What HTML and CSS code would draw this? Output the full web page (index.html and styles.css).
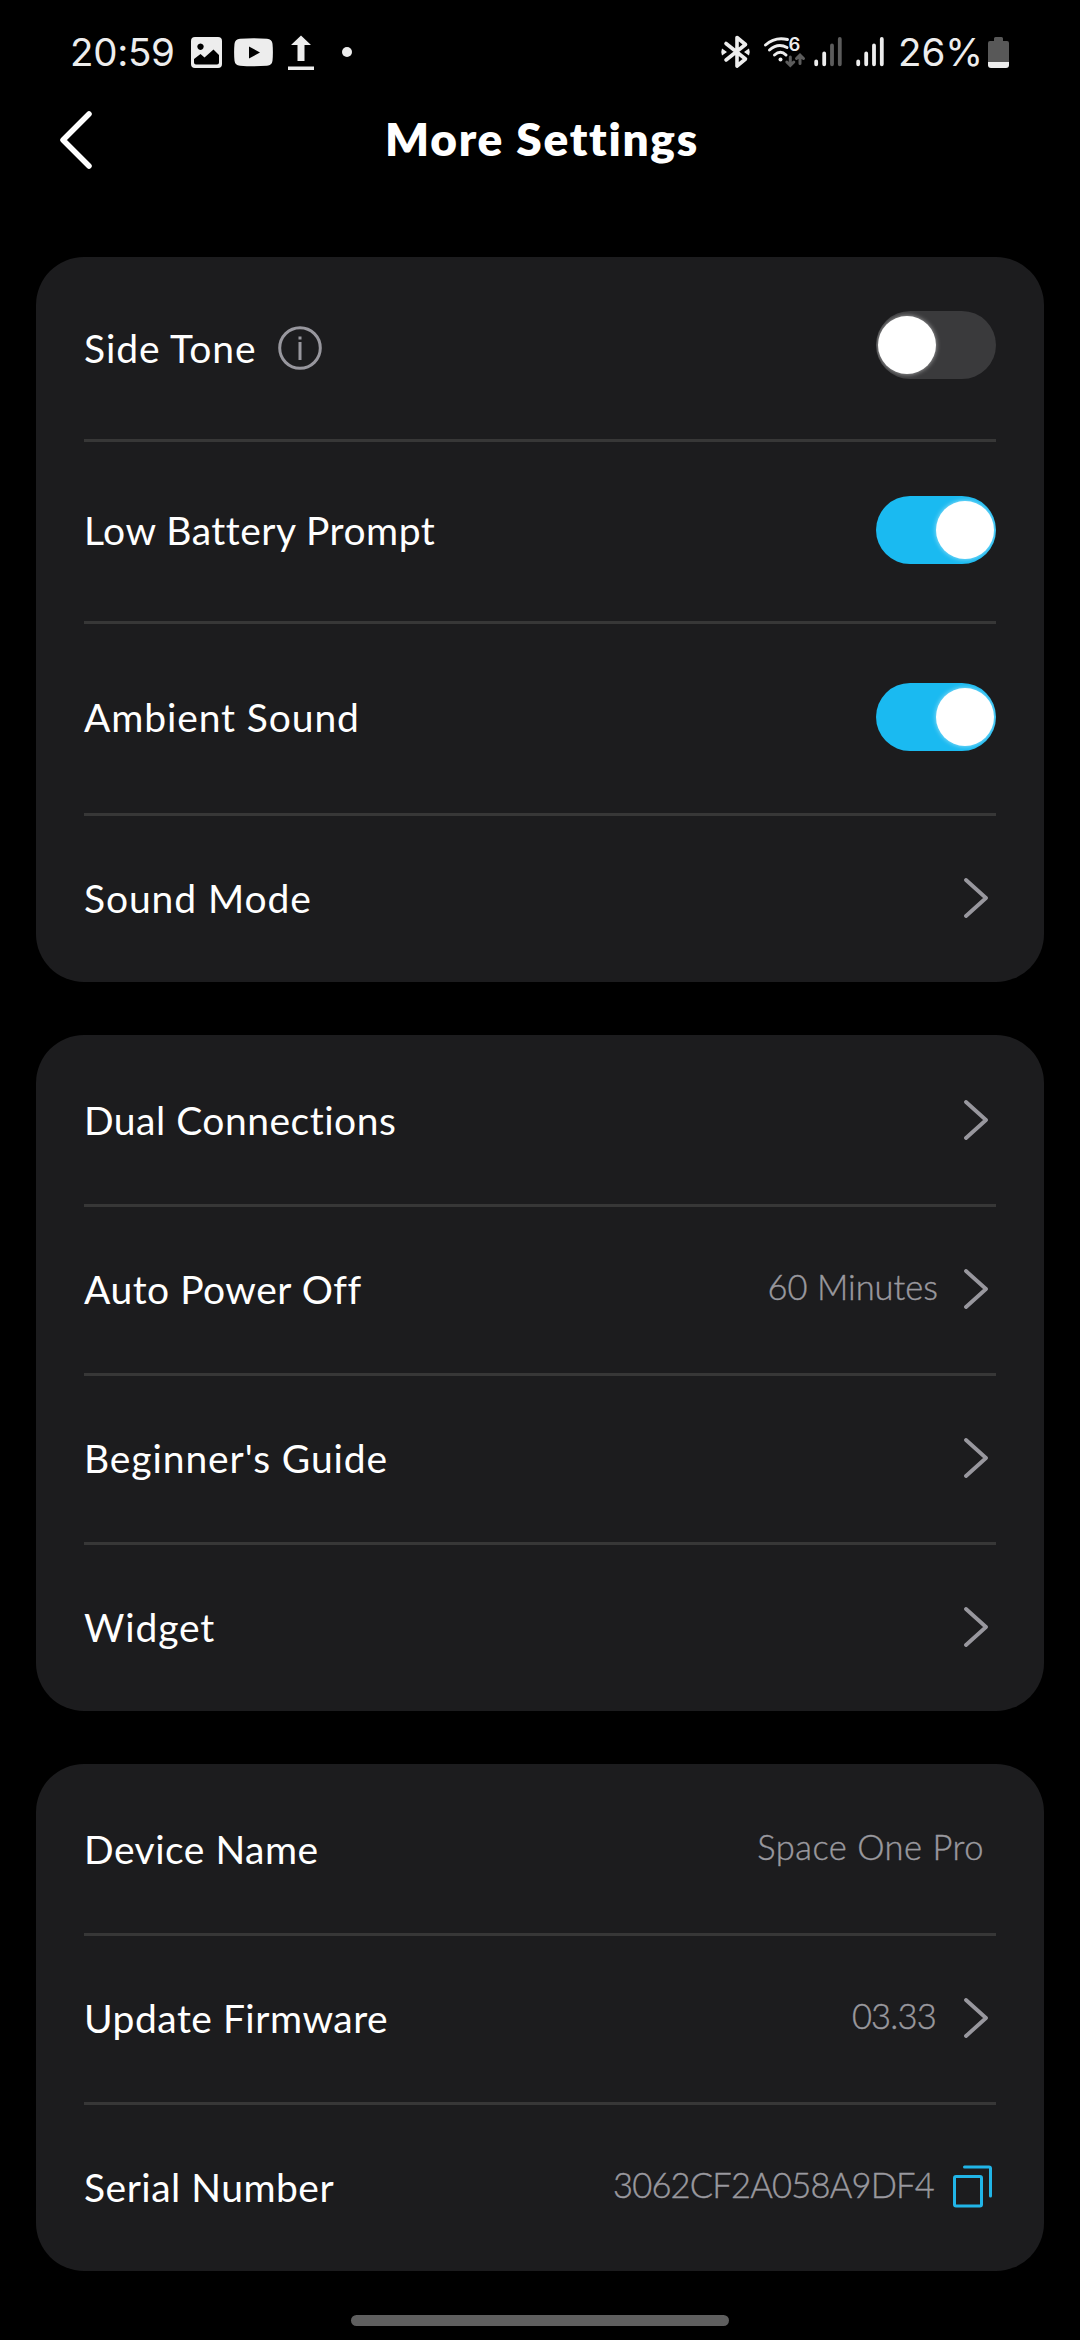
FILE: index.html
```html
<!DOCTYPE html>
<html lang="en">
<head>
    <meta charset="UTF-8">
    <meta name="viewport" content="width=device-width, initial-scale=1.0">
    <title>More Settings</title>
    <link rel="stylesheet" href="styles.css">
</head>
<body>
    <!-- Status bar -->
    <div class="status-bar">
        <div class="status-left">
            <span class="clock">20:59</span>
            <svg class="status-icons" width="168" height="44" viewBox="186 30 168 44">
                <path fill="#ededed" fill-rule="evenodd" d="M195 37h23a4 4 0 0 1 4 4v23a4 4 0 0 1-4 4h-23a4 4 0 0 1-4-4V41a4 4 0 0 1 4-4zM200.500 43.500a3.200 3.200 0 1 0 .01 0zM194 59v3.500a2 2 0 0 0 2 2h21a2 2 0 0 0 2-2V55l-5.500-5.500-9 8-4-3.500z"/>
                <path fill="#ededed" fill-rule="evenodd" d="M240 38.700q13.500-1 27 0 5 .3 5.500 5 .8 8.500 0 17-.5 4.500-5.500 5-13.500 1-27 0-5-.5-5.500-5-.8-8.500 0-17 .5-4.700 5.500-5zM249 46.500v12l11-6z"/>
                <path fill="#ededed" d="M301 35.500l10 9.500h-6.500v16h-7V45H291zM288 66.500h26v3.500h-26z"/>
                <circle cx="347" cy="52" r="5" fill="#ededed"/>
            </svg>
        </div>
        <div class="status-right">
            <svg class="status-icons" width="174" height="44" viewBox="716 30 174 44">
                <!-- bluetooth -->
                <path fill="none" stroke="#ededed" stroke-width="3.600" stroke-linecap="round" stroke-linejoin="round" d="M726 43.500l19.500 15.500-8.500 7V37.500l8.500 7L726 60"/>
                <path fill="#ededed" d="M722 48.500l5 3.500-5 3.500q-1.500-3.500 0-7zM749 48.500l-5 3.500 5 3.500q1.500-3.500 0-7z"/>
                <!-- wifi -->
                <g fill="none" stroke="#ededed" stroke-width="3" stroke-linecap="round">
                    <path d="M765.500 45Q775 36.500 787.500 39.500"/>
                    <path d="M769.500 50Q778 42.500 787 47.500"/>
                    <path d="M774.500 55Q780.500 49.500 786 55"/>
                </g>
                <circle cx="780.500" cy="59.500" r="2" fill="#ededed"/>
                <text class="wifi-gen" x="788.500" y="50.500">6</text>
                <path fill="none" stroke="#5c5c5c" stroke-width="3" stroke-linecap="round" d="M790.300 57v8M786.800 62l3.500 3.500 3.500-3.500M800 63.500v-8M796.500 58.500l3.500-3.500 3.500 3.500"/>
                <!-- signal bars -->
                <g stroke-width="3.800" stroke-linecap="round" stroke="#ededed">
                    <path d="M816.200 61.500v2.800M824.200 53.500v10.800"/>
                    <path stroke="#5c5c5c" d="M832 45.500v18.800M839.800 39v25.300"/>
                    <path d="M858.200 61.500v2.800M866.200 53.500v10.800M874 45.500v18.800M881.800 39v25.300"/>
                </g>
            </svg>
            <span class="battery-text">26%</span>
            <svg class="battery" width="21" height="31" viewBox="0 0 21 31">
                <path fill="#585858" d="M6 1.500A1.500 1.500 0 0 1 7.500 0h6A1.500 1.500 0 0 1 15 1.500V4h4a2 2 0 0 1 2 2v19H0V6a2 2 0 0 1 2-2h4z"/>
                <path fill="#ededed" d="M0 25h21v3a3 3 0 0 1-3 3H3a3 3 0 0 1-3-3z"/>
            </svg>
        </div>
    </div>

    <!-- Header -->
    <header class="header">
        <svg class="back" width="34" height="60" viewBox="0 0 34 60">
            <path d="M30 4L4 30l26 26"/>
        </svg>
        <h1 class="title">More Settings</h1>
    </header>

    <main class="settings">
        <section class="card">
            <div class="row row-toggle">
                <span class="label wide">Side Tone</span>
                <svg class="info" width="44" height="44" viewBox="0 0 44 44">
                    <circle cx="22" cy="22" r="20.300"/>
                    <path d="M22 10.500v3M22 16v18"/>
                </svg>
                <span class="toggle toggle-raised"><span class="knob"></span></span>
            </div>
            <div class="row row-toggle">
                <span class="label">Low Battery Prompt</span>
                <span class="toggle on"><span class="knob"></span></span>
            </div>
            <div class="row row-ambient">
                <span class="label wide">Ambient Sound</span>
                <span class="toggle on"><span class="knob"></span></span>
            </div>
            <div class="row">
                <span class="label wide">Sound Mode</span>
                <svg class="chevron" width="24" height="40" viewBox="0 0 24 40"><path d="M2 2l20 18L2 38"/></svg>
            </div>
        </section>

        <section class="card">
            <div class="row">
                <span class="label">Dual Connections</span>
                <svg class="chevron" width="24" height="40" viewBox="0 0 24 40"><path d="M2 2l20 18L2 38"/></svg>
            </div>
            <div class="row">
                <span class="label">Auto Power Off</span>
                <span class="value">60 Minutes</span>
                <svg class="chevron" width="24" height="40" viewBox="0 0 24 40"><path d="M2 2l20 18L2 38"/></svg>
            </div>
            <div class="row">
                <span class="label wide">Beginner's Guide</span>
                <svg class="chevron" width="24" height="40" viewBox="0 0 24 40"><path d="M2 2l20 18L2 38"/></svg>
            </div>
            <div class="row">
                <span class="label wide">Widget</span>
                <svg class="chevron" width="24" height="40" viewBox="0 0 24 40"><path d="M2 2l20 18L2 38"/></svg>
            </div>
        </section>

        <section class="card">
            <div class="row">
                <span class="label">Device Name</span>
                <span class="value device-name">Space One Pro</span>
            </div>
            <div class="row">
                <span class="label">Update Firmware</span>
                <span class="value version">03.33</span>
                <svg class="chevron" width="24" height="40" viewBox="0 0 24 40"><path d="M2 2l20 18L2 38"/></svg>
            </div>
            <div class="row">
                <span class="label">Serial Number</span>
                <span class="value serial">3062CF2A058A9DF4</span>
                <svg class="copy" width="40" height="43" viewBox="0 0 40 43">
                    <rect x="1.500" y="11.500" width="27" height="29.500" rx="1.500"/>
                    <path d="M11.500 2H36a1.500 1.500 0 0 1 1.500 1.500V31"/>
                </svg>
            </div>
        </section>
    </main>

    <div class="home-bar"></div>
</body>
</html>
```
FILE: styles.css
```css
* {
    box-sizing: border-box;
}
body {
    margin: 0;
    width: 1080px;
    height: 2340px;
    background: #000;
    color: #fff;
    font-family: Lato, "Open Sans", sans-serif;
    display: flex;
    flex-direction: column;
    overflow: hidden;
}
svg {
    display: block;
    flex: none;
}

/* Status bar */
.status-bar {
    display: flex;
    justify-content: space-between;
    height: 104px;
    padding: 0 71px 0 70px;
    font-family: Inter, Roboto, sans-serif;
    font-size: 38.500px;
    color: #ededed;
}
.status-left,
.status-right {
    display: flex;
    align-items: center;
}
.clock {
    width: 116px;
    letter-spacing: -0.300px;
}
.battery-text {
    width: 90px;
    padding-left: 8px;
    white-space: nowrap;
}
.battery {
    margin-left: 8px;
}
.wifi-gen {
    font-size: 18.500px;
    font-weight: 600;
    fill: #ededed;
}

/* Header */
.header {
    position: relative;
    display: flex;
    align-items: center;
    justify-content: center;
    height: 72px;
}
.back {
    position: absolute;
    left: 59px;
    top: 6px;
    fill: none;
    stroke: #fff;
    stroke-width: 5.500;
    stroke-linecap: round;
    stroke-linejoin: round;
}
.title {
    margin: 0;
    padding: 0 0 4px 4px;
    font-size: 46px;
    font-weight: 800;
    letter-spacing: 1.700px;
}

/* Cards */
.settings {
    display: flex;
    flex-direction: column;
    gap: 53px;
    padding: 81px 36px 0;
}
.card {
    padding: 0 48px;
    border-radius: 48px;
    background: #1c1c1e;
}
.row {
    display: flex;
    align-items: center;
    height: 169px;
}
.row + .row {
    box-shadow: inset 0 3px 0 #373737;
}
.row-toggle {
    height: 182px;
}
.row-ambient {
    height: 192px;
}
.label {
    margin-right: auto;
    font-size: 39px;
    white-space: nowrap;
    letter-spacing: 0.500px;
}
.label.wide {
    letter-spacing: 0.900px;
}
.value {
    padding-bottom: 5px;
    font-size: 34.500px;
    font-weight: 300;
    color: #9a999f;
    -webkit-text-stroke: 0.400px #9a999f;
    white-space: nowrap;
}
.device-name {
    margin-right: 12px;
    letter-spacing: 0.500px;
}
.version {
    margin-right: 2px;
    letter-spacing: -0.800px;
}
.serial {
    letter-spacing: -0.800px;
}
.info {
    margin: 0 auto 0 22px;
    fill: none;
    stroke: #98979e;
    stroke-width: 3;
}
.label:has(+ .info) {
    margin-right: 0;
}
.chevron {
    margin: 0 8px 0 26px;
    fill: none;
    stroke: #98979e;
    stroke-width: 3.800;
    stroke-linecap: round;
    stroke-linejoin: round;
}
.copy {
    margin: 0 3px 0 19px;
    fill: none;
    stroke: #21b5e8;
    stroke-width: 3;
    stroke-linecap: round;
}

/* Toggle switch */
.toggle {
    display: flex;
    align-items: center;
    width: 120px;
    height: 68px;
    padding: 0 2px;
    border-radius: 34px;
    background: #3a3a3c;
    overflow: hidden;
}
.toggle.on {
    justify-content: flex-end;
    background: #1abaf1;
}
.toggle-raised {
    margin-bottom: 6px;
}
.knob {
    width: 58px;
    height: 58px;
    border-radius: 50%;
    background: #fff;
    box-shadow: 0 0 5px rgba(255, 255, 255, 0.6);
}

.home-bar {
    width: 378px;
    height: 11px;
    margin: 44px auto 0;
    border-radius: 6px;
    background: #5f5f5f;
}
```
